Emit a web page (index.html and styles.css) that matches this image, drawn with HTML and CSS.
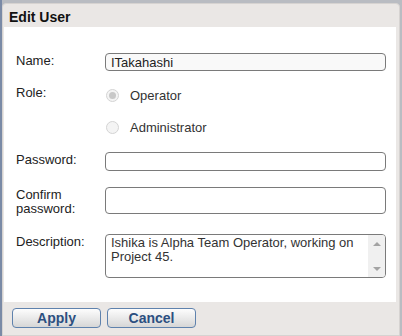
FILE: index.html
```
<!DOCTYPE html>
<html>
<head>
<meta charset="utf-8">
<title>Edit User</title>
<link rel="stylesheet" href="styles.css">
</head>
<body>
<div class="dialog">
  <div class="title">Edit User</div>
  <div class="content">
    <div class="row r-name">
      <label class="lbl">Name:</label>
      <input class="txt t-name" type="text" value="ITakahashi">
    </div>
    <div class="row r-role">
      <label class="lbl">Role:</label>
      <div class="radios">
        <div class="opt"><span class="radio checked"></span>Operator</div>
        <div class="opt"><span class="radio"></span>Administrator</div>
      </div>
    </div>
    <div class="row r-pass">
      <label class="lbl">Password:</label>
      <input class="txt t-pass" type="password">
    </div>
    <div class="row r-confirm">
      <label class="lbl">Confirm<br>password:</label>
      <input class="txt t-confirm" type="password">
    </div>
    <div class="row r-desc">
      <label class="lbl">Description:</label>
      <div class="area">
        <div class="area-text">Ishika is Alpha Team Operator, working on Project 45.</div>
        <div class="sbar"><span class="up"></span><span class="down"></span></div>
      </div>
    </div>
  </div>
  <div class="footer">
    <button class="btn">Apply</button>
    <button class="btn">Cancel</button>
  </div>
</div>
</body>
</html>
```
FILE: styles.css
```
*{ margin:0; padding:0; box-sizing:border-box;}
body{ background:#b9bcc2; font-family:"Liberation Sans", Arial, sans-serif; font-size:13px; color:#222; border-left:2px solid #7a8aa6;}
.dialog{ width:398px; height:333px; margin-top:3px; background:#eae7e5; border:1px solid #d6d3d1; border-radius:4px 4px 0 0; padding:0 3px 0 1px; display:flex; flex-direction:column;}
.title{ height:23px; font-size:14px; font-weight:bold; color:#111; padding:5px 0 0 5px; line-height:16px;}
.content{ background:#fff; height:275px; padding:26px 10px 0 12px;}
.row{ display:flex; align-items:flex-start;}
.lbl{ width:89px; line-height:14px; flex:none; margin-top:1px;}
.txt{ width:282px; border:1px solid #7a7a7a; border-radius:4px; background:#fff; font:13px "Liberation Sans", Arial, sans-serif; color:#222; padding:0 5px; outline:none;}
.t-name{ height:18px; background:#f9f9f9;}
.r-role{ margin-top:14px;}
.radios{ display:flex; flex-direction:column; gap:12px;}
.opt{ height:20px; display:flex; align-items:center; color:#333;}
.radio{ width:13px; height:13px; border-radius:50%; border:1px solid #d4d4d4; background:#f4f4f4; margin:0 11px 0 1px; display:flex; align-items:center; justify-content:center;}
.radio.checked::after{ content:""; width:7px; height:7px; border-radius:50%; background:#c8c8c8;}
.r-pass{ margin-top:15px;}
.t-pass{ height:19px;}
.r-confirm{ margin-top:16px;}
.t-confirm{ height:27px;}
.r-desc{ margin-top:18px;}
.area{ width:282px; height:44px; border:1px solid #7a7a7a; border-radius:4px; display:flex; overflow:hidden;}
.area-text{ flex:1; padding:1px 0 0 5px; line-height:14px; color:#333;}
.sbar{ width:17px; background:#f0f0f0; position:relative;}
.sbar span{ position:absolute; left:5px; width:0; height:0; border-left:4px solid transparent; border-right:4px solid transparent;}
.sbar .up{ top:7px; border-bottom:4px solid #a3a3a3;}
.sbar .down{ bottom:6px; border-top:4px solid #a3a3a3;}
.footer{ display:flex; gap:6px; padding:6px 0 0 8px;}
.btn{ width:89px; height:20px; border:1px solid #5f82ad; border-radius:4px; background:linear-gradient(#fdfdfd,#e6e6e6 60%,#d6d6d6); font:bold 14px "Liberation Sans", Arial, sans-serif; color:#2c4f80; line-height:17px;}
```
